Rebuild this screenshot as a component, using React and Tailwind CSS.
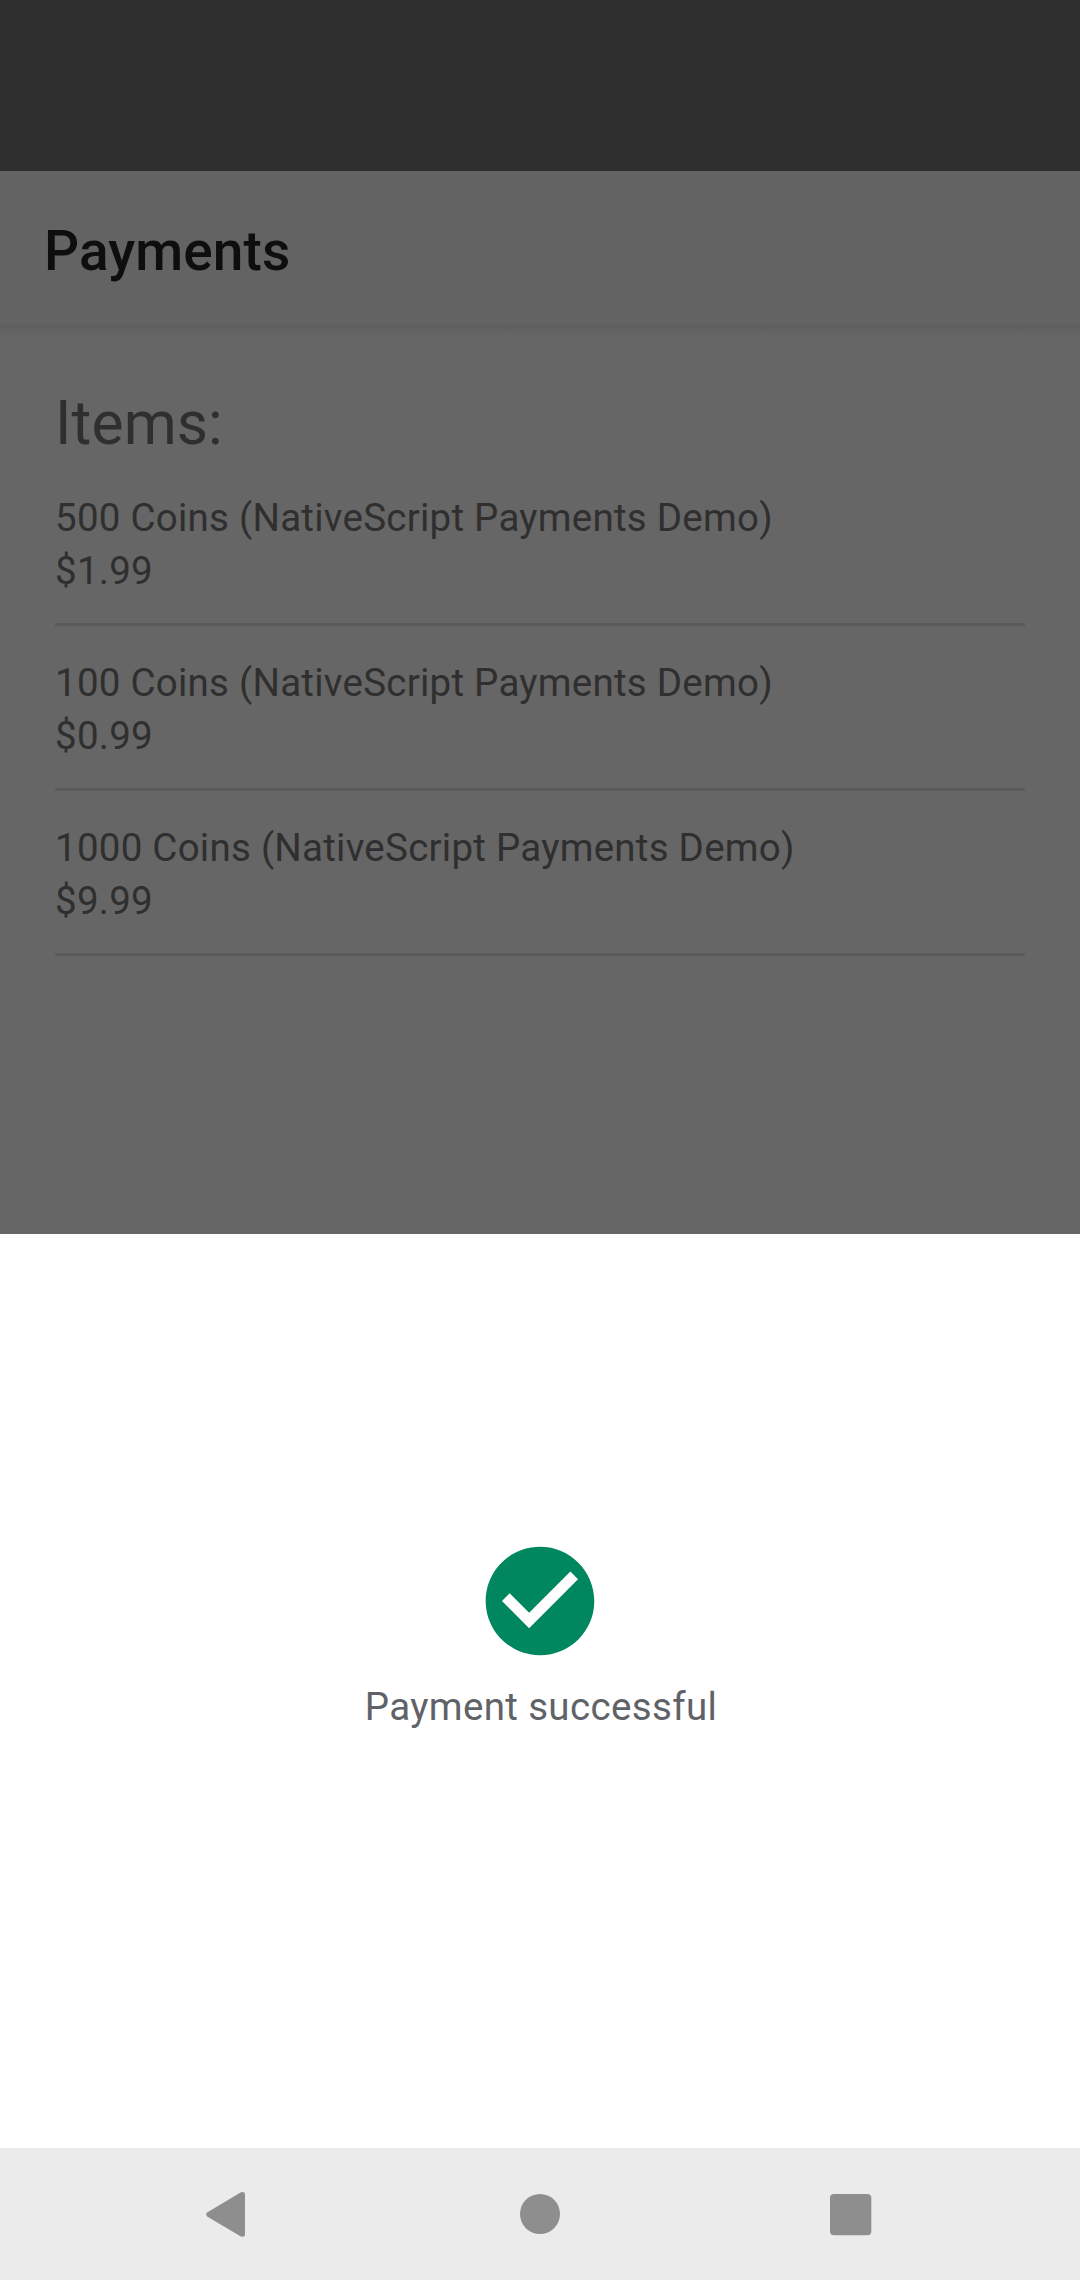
export default function App() {
  const items = [
    ["500 Coins (NativeScript Payments Demo)", "$1.99"],
    ["100 Coins (NativeScript Payments Demo)", "$0.99"],
    ["1000 Coins (NativeScript Payments Demo)", "$9.99"],
  ];
  return (
    <div className="flex h-[2280px] w-[1080px] flex-col overflow-hidden bg-[#666666] font-['Roboto',sans-serif]">
      <div className="h-[171px] shrink-0 bg-[#2f2f2f]" />
      <header className="flex h-[154px] shrink-0 items-center bg-[#636363] px-[44px] pt-[6px]">
        <h1 className="text-[55px] font-medium leading-none tracking-[0.1px] text-[#0e0e0e]">Payments</h1>
      </header>
      <div className="h-[14px] shrink-0 bg-linear-to-b from-[#5d5d5d] via-[#636363] to-[#666666]" />
      <main className="flex h-[895px] shrink-0 flex-col px-[55px] pt-[47px] text-[#2f2f2f]">
        <h2 className="h-[75px] text-[60.5px] leading-[76px] tracking-[0.1px]">Items:</h2>
        {items.map(([name, price]) => (
          <div key={name} className="flex h-[165px] flex-col border-b-[3px] border-[#5a5a5a] pt-[30px] text-[38.5px] leading-[53px] tracking-[0.25px]">
            <p>{name}</p>
            <p>{price}</p>
          </div>
        ))}
      </main>
      <section className="flex h-[914px] shrink-0 flex-col items-center bg-white pt-[312px]">
        <svg className="size-[110px]" viewBox="1.87 1.87 20.26 20.26" fill="#01875f">
          <path d="M12 2C6.48 2 2 6.48 2 12s4.48 10 10 10 10-4.48 10-10S17.52 2 12 2zm-2 15l-5-5 1.41-1.41L10 14.17l7.59-7.59L19 8l-9 9z" />
        </svg>
        <p className="mt-[24px] pl-[2px] text-[38.5px] leading-[53px] tracking-[0.36px] text-[#5f6368]">Payment successful</p>
      </section>
      <nav className="flex h-[132px] shrink-0 items-center bg-[#ebebeb]">
        <svg className="h-[132px] w-[1080px]" viewBox="0 2148 1080 132" fill="#8e8e8e">
          <path d="M207.5 2212.2 L240.5 2192.5 Q245 2191 245 2195 V2234 Q245 2238 240.5 2236.2 L207.5 2216.8 Q205 2214.5 207.5 2212.2Z" />
          <circle cx="540" cy="2214" r="20" />
          <rect x="830" y="2194" width="41.3" height="41.3" rx="4" />
        </svg>
      </nav>
    </div>
  );
}
